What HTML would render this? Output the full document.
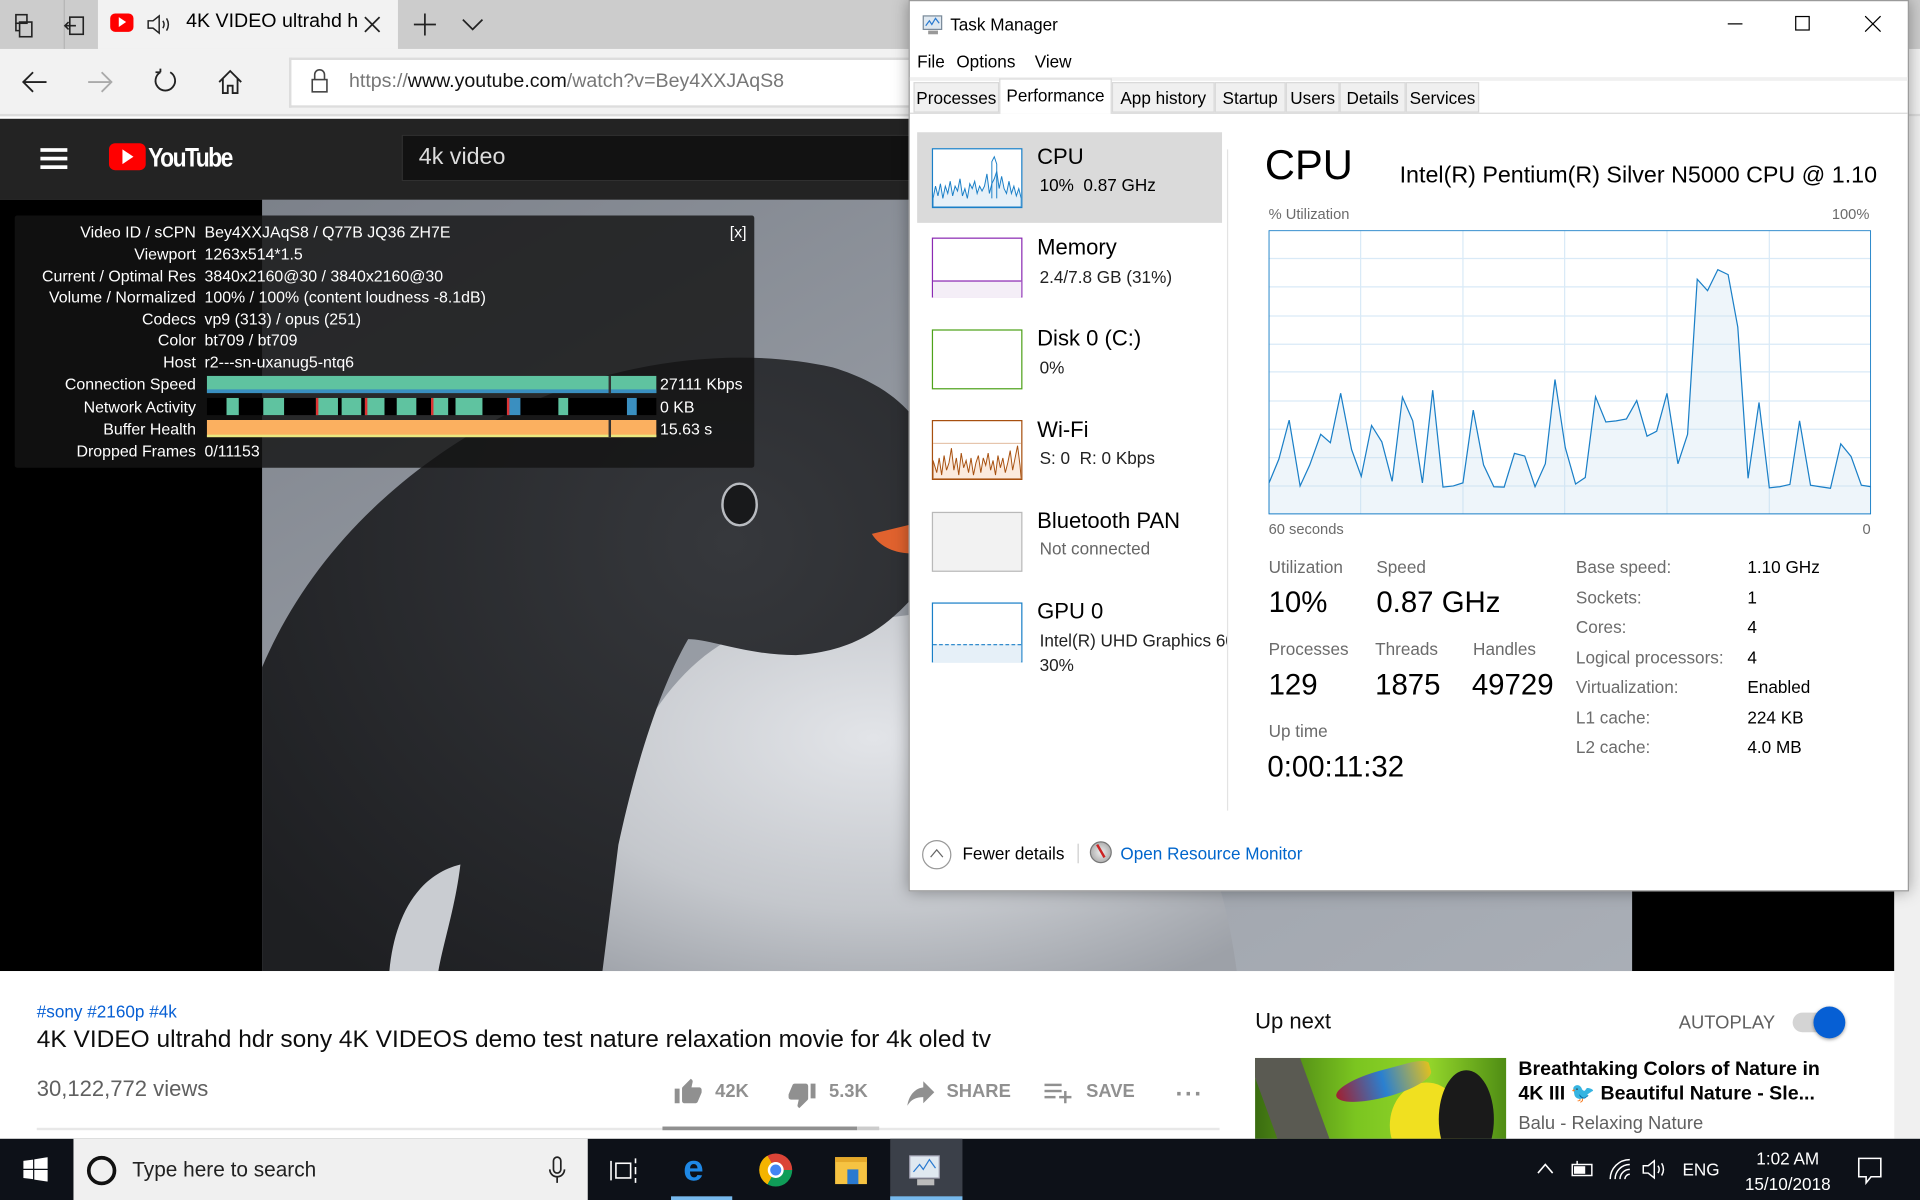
<!DOCTYPE html>
<html><head><meta charset="utf-8"><style>
*{margin:0;padding:0;box-sizing:border-box}
html,body{width:1920px;height:1200px;overflow:hidden;background:#fff}
#w{position:absolute;left:0;top:0;width:1568px;height:980px;transform:scale(1.2244898);transform-origin:0 0;font-family:"Liberation Sans",sans-serif;overflow:hidden}
.a{position:absolute;white-space:nowrap}
.st{font-size:13px;color:#fff;line-height:18px}
.st .l{position:absolute;right:456px;text-align:right}
.st .v{position:absolute;left:155px}
.tab{position:absolute;top:67px;height:25px;background:#f0f0f0;border:1px solid #d9d9d9;font-size:14px;line-height:24px;text-align:center;color:#000}
.th{position:absolute;left:761px;width:74px;height:49px;background:#fff}
.tt{position:absolute;left:847px;font-size:18px;color:#000;white-space:nowrap}
.ts{position:absolute;left:849px;font-size:14px;color:#222;white-space:nowrap}
.lb{position:absolute;font-size:14px;color:#6b6b6b}
.vb{position:absolute;font-size:24px;color:#000}
.rl{position:absolute;left:1287px;font-size:14px;color:#6b6b6b}
.rv{position:absolute;left:1427px;font-size:14px;color:#000}
</style></head><body><div id="w">

<!-- browser tab bar -->
<div class="a" style="left:0;top:0;width:1568px;height:40px;background:#cccccc"></div>
<div class="a" style="left:80px;top:0;width:245px;height:40px;background:#f2f2f2"></div>
<div class="a" style="left:52px;top:0;width:1px;height:40px;background:#b5b5b5"></div>
<svg class="a" style="left:10px;top:10px" width="22" height="22" viewBox="0 0 22 22" fill="none" stroke="#222" stroke-width="1.3"><rect x="3" y="2" width="9" height="7"/><rect x="6" y="8" width="10" height="12"/><path d="M3 9v6h3"/></svg>
<svg class="a" style="left:51px;top:11px" width="20" height="20" viewBox="0 0 20 20" fill="none" stroke="#222" stroke-width="1.3"><rect x="6" y="3" width="11" height="14"/><path d="M2 10h9M5 7l-3 3 3 3"/></svg>
<div class="a" style="left:90px;top:11px;width:19px;height:15px;background:#f00;border-radius:4px"></div>
<div class="a" style="left:97px;top:14px;width:0;height:0;border-left:6px solid #fff;border-top:4.5px solid transparent;border-bottom:4.5px solid transparent"></div>
<svg class="a" style="left:119px;top:10px" width="22" height="20" viewBox="0 0 22 20" fill="none" stroke="#222" stroke-width="1.2"><path d="M2 7h4l5-4v14l-5-4H2z"/><path d="M14 7q2 3 0 6M17 5q3 5 0 10"/></svg>
<div class="a" style="left:152px;top:9px;font-size:16px;color:#000">4K VIDEO ultrahd h</div>
<svg class="a" style="left:297px;top:13px" width="14" height="14" viewBox="0 0 14 14" stroke="#222" stroke-width="1.4"><path d="M1 1l12 12M13 1L1 13"/></svg>
<svg class="a" style="left:337px;top:10px" width="20" height="20" viewBox="0 0 20 20" stroke="#222" stroke-width="1.4"><path d="M10 1v18M1 10h18"/></svg>
<svg class="a" style="left:377px;top:14px" width="18" height="12" viewBox="0 0 18 12" fill="none" stroke="#222" stroke-width="1.4"><path d="M1 2l8 8 8-8"/></svg>

<!-- address bar -->
<div class="a" style="left:0;top:40px;width:1568px;height:55px;background:#f2f2f2;border-bottom:2px solid #ddd"></div>
<svg class="a" style="left:16px;top:56px" width="24" height="22" viewBox="0 0 24 22" fill="none" stroke="#222" stroke-width="1.5"><path d="M22 11H3M11 3l-8 8 8 8"/></svg>
<svg class="a" style="left:70px;top:56px" width="24" height="22" viewBox="0 0 24 22" fill="none" stroke="#aaa" stroke-width="1.5"><path d="M2 11h19M13 3l8 8-8 8"/></svg>
<svg class="a" style="left:124px;top:55px" width="22" height="24" viewBox="0 0 22 24" fill="none" stroke="#222" stroke-width="1.5"><path d="M7 4A8 8 0 1 0 15 4M7 4V1M7 4H3"/></svg>
<svg class="a" style="left:176px;top:55px" width="24" height="24" viewBox="0 0 24 24" fill="none" stroke="#222" stroke-width="1.5"><path d="M3 12L12 3l9 9M6 9v12h4v-6h4v6h4V9"/></svg>
<div class="a" style="left:236px;top:47px;width:520px;height:41px;background:#fff;border:2px solid #ddd;border-right:none"></div>
<svg class="a" style="left:254px;top:56px" width="14" height="20" viewBox="0 0 14 20" fill="none" stroke="#444" stroke-width="1.3"><path d="M3 9V5a4 4 0 0 1 8 0v4"/><rect x="1" y="9" width="12" height="10"/></svg>
<div class="a" style="left:285px;top:58px;font-size:16px;color:#777">https://<span style="color:#111">www.youtube.com</span>/watch?v=Bey4XXJAqS8</div>

<!-- youtube header -->
<div class="a" style="left:0;top:97px;width:1568px;height:66px;background:#232323"></div>
<div class="a" style="left:33px;top:121px;width:22px;height:3px;background:#fff;box-shadow:0 7px 0 #fff,0 14px 0 #fff"></div>
<div class="a" style="left:89px;top:117px;width:30px;height:22px;background:#f00;border-radius:5px"></div>
<div class="a" style="left:100px;top:122px;width:0;height:0;border-left:9px solid #fff;border-top:6px solid transparent;border-bottom:6px solid transparent"></div>
<div class="a" style="left:121px;top:116px;font-size:22px;color:#fff;letter-spacing:-1.5px;transform:scaleX(.85);transform-origin:0 0;font-weight:bold">YouTube</div>
<div class="a" style="left:328px;top:110px;width:430px;height:38px;background:#121212;border:1px solid #303030"></div>
<div class="a" style="left:342px;top:118px;font-size:19px;color:#ddd">4k video</div>

<!-- video -->
<div class="a" style="left:0;top:163px;width:1547px;height:630px;background:#000"></div>
<svg class="a" style="left:214px;top:163px" width="1119" height="630" viewBox="214 163 1119 630">
<defs>
<linearGradient id="bg" x1="0" y1="0" x2="1" y2="1"><stop offset="0" stop-color="#7c818a"/><stop offset=".5" stop-color="#9a9fa7"/><stop offset="1" stop-color="#a9aeb6"/></linearGradient>
<radialGradient id="wb" cx=".45" cy=".35" r=".8"><stop offset="0" stop-color="#e2e4e8"/><stop offset=".6" stop-color="#c4c7cc"/><stop offset="1" stop-color="#9da1a8"/></radialGradient>
<radialGradient id="dk" cx=".7" cy=".3" r=".9"><stop offset="0" stop-color="#36383c"/><stop offset="1" stop-color="#1e1f22"/></radialGradient>
</defs>
<rect x="214" y="163" width="1119" height="630" fill="url(#bg)"/>
<path d="M470 793 C480 680 520 560 600 520 L760 500 L900 560 C980 650 1000 720 1010 793 Z" fill="url(#wb)"/>
<path d="M214 793 L214 545 C250 460 320 385 420 335 C500 295 600 282 680 300 C730 315 760 345 760 380 L760 470 C730 510 700 532 650 535 C610 535 580 522 562 522 C540 560 520 620 505 690 L492 793 Z" fill="url(#dk)"/>
<path d="M318 793 C322 750 340 715 376 706 C372 740 362 770 358 793 Z" fill="#c9ccd1"/>
<ellipse cx="604" cy="412" rx="14" ry="17" fill="#18191b" stroke="#b8bbc0" stroke-width="2"/>
<path d="M712 436 L745 428 L745 452 C730 452 718 446 712 436Z" fill="#e0622e"/>
</svg>
<div class="a" style="left:1547px;top:95px;width:21px;height:835px;background:#f0f0f0"></div>

<!-- stats for nerds -->
<div class="a" style="left:12px;top:176px;width:604px;height:206px;background:rgba(20,20,20,.82);border-radius:2px"></div>
<div class="a st" style="left:12px;top:181px;width:604px;height:200px">
 <span class="l" style="top:0">Video ID / sCPN</span><span class="v" style="top:0">Bey4XXJAqS8 / Q77B JQ36 ZH7E</span>
 <span class="l" style="top:18px">Viewport</span><span class="v" style="top:18px">1263x514*1.5</span>
 <span class="l" style="top:36px">Current / Optimal Res</span><span class="v" style="top:36px">3840x2160@30 / 3840x2160@30</span>
 <span class="l" style="top:53px">Volume / Normalized</span><span class="v" style="top:53px">100% / 100% (content loudness -8.1dB)</span>
 <span class="l" style="top:71px">Codecs</span><span class="v" style="top:71px">vp9 (313) / opus (251)</span>
 <span class="l" style="top:88px">Color</span><span class="v" style="top:88px">bt709 / bt709</span>
 <span class="l" style="top:106px">Host</span><span class="v" style="top:106px">r2---sn-uxanug5-ntq6</span>
 <span class="l" style="top:124px">Connection Speed</span><span class="v" style="top:124px;left:527px">27111 Kbps</span>
 <span class="l" style="top:143px">Network Activity</span><span class="v" style="top:143px;left:527px">0 KB</span>
 <span class="l" style="top:161px">Buffer Health</span><span class="v" style="top:161px;left:527px">15.63 s</span>
 <span class="l" style="top:179px">Dropped Frames</span><span class="v" style="top:179px">0/11153</span>
 <span class="a" style="left:584px;top:0">[x]</span>
</div>
<div class="a" style="left:169px;top:307px;width:367px;height:14px;background:#5fc3a0;border-bottom:3px solid #3a8fc0"></div>
<div class="a" style="left:497px;top:307px;width:2px;height:14px;background:#333"></div>
<div class="a" style="left:169px;top:325px;width:367px;height:14px;background:#000"></div>
<div class="a" style="left:185px;top:325px;width:10px;height:14px;background:#5fc3a0"></div>
<div class="a" style="left:215px;top:325px;width:17px;height:14px;background:#5fc3a0"></div>
<div class="a" style="left:258px;top:325px;width:18px;height:14px;background:#5fc3a0;border-left:2px solid #d33"></div>
<div class="a" style="left:279px;top:325px;width:16px;height:14px;background:#5fc3a0"></div>
<div class="a" style="left:298px;top:325px;width:16px;height:14px;background:#5fc3a0;border-left:2px solid #d33"></div>
<div class="a" style="left:324px;top:325px;width:16px;height:14px;background:#5fc3a0"></div>
<div class="a" style="left:352px;top:325px;width:14px;height:14px;background:#5fc3a0;border-left:2px solid #d33"></div>
<div class="a" style="left:372px;top:325px;width:22px;height:14px;background:#5fc3a0"></div>
<div class="a" style="left:414px;top:325px;width:11px;height:14px;background:#3a8fc0;border-left:2px solid #d33"></div>
<div class="a" style="left:456px;top:325px;width:8px;height:14px;background:#5fc3a0"></div>
<div class="a" style="left:512px;top:325px;width:8px;height:14px;background:#3a8fc0"></div>
<div class="a" style="left:169px;top:343px;width:367px;height:14px;background:#fbb060;border-bottom:2px solid #e8e880"></div>
<div class="a" style="left:497px;top:343px;width:2px;height:14px;background:#333"></div>

<!-- below video -->
<div class="a" style="left:30px;top:818px;font-size:14px;color:#065fd4">#sony #2160p #4k</div>
<div class="a" style="left:30px;top:838px;font-size:20px;color:#0d0d0d">4K VIDEO ultrahd hdr sony 4K VIDEOS demo test nature relaxation movie for 4k oled tv</div>
<div class="a" style="left:30px;top:879px;font-size:18px;color:#606060">30,122,772 views</div>
<svg class="a" style="left:550px;top:880px" width="24" height="24" viewBox="0 0 24 24" fill="#909090"><path d="M1 21h4V9H1v12zm22-11c0-1.1-.9-2-2-2h-6.3l1-4.6v-.3c0-.4-.2-.8-.4-1.1L14.2 1 7.6 7.6C7.2 7.9 7 8.4 7 9v10c0 1.1.9 2 2 2h9c.8 0 1.5-.5 1.8-1.2l3-7.1c.1-.2.2-.5.2-.7v-2z"/></svg>
<div class="a" style="left:584px;top:883px;font-size:15px;color:#909090;font-weight:bold">42K</div>
<svg class="a" style="left:643px;top:882px" width="24" height="24" viewBox="0 0 24 24" fill="#909090"><path d="M15 3H6c-.8 0-1.5.5-1.8 1.2l-3 7.1c-.1.2-.2.5-.2.7v2c0 1.1.9 2 2 2h6.3l-1 4.6v.3c0 .4.2.8.4 1.1L9.8 23l6.6-6.6c.4-.4.6-.9.6-1.4V5c0-1.1-.9-2-2-2zm4 0v12h4V3h-4z"/></svg>
<div class="a" style="left:677px;top:883px;font-size:15px;color:#909090;font-weight:bold">5.3K</div>
<svg class="a" style="left:740px;top:882px" width="24" height="22" viewBox="0 0 24 22" fill="#909090"><path d="M14 6V1l9 9-9 9v-5C8 14 4 16 1 21 2 14 6 7 14 6z"/></svg>
<div class="a" style="left:773px;top:883px;font-size:15px;color:#909090;font-weight:bold">SHARE</div>
<svg class="a" style="left:853px;top:884px" width="24" height="18" viewBox="0 0 24 18" fill="#909090"><rect x="0" y="1" width="14" height="2"/><rect x="0" y="6" width="14" height="2"/><rect x="0" y="11" width="9" height="2"/><rect x="12" y="11" width="10" height="2"/><rect x="16" y="7" width="2" height="10"/></svg>
<div class="a" style="left:887px;top:883px;font-size:15px;color:#909090;font-weight:bold">SAVE</div>
<div class="a" style="left:960px;top:883px;font-size:20px;color:#909090;font-weight:bold;letter-spacing:1px">···</div>
<div class="a" style="left:30px;top:921px;width:966px;height:2px;background:#e8e8e8"></div>
<div class="a" style="left:541px;top:920px;width:159px;height:3px;background:#909090"></div>
<div class="a" style="left:700px;top:920px;width:18px;height:3px;background:#ccc"></div>

<div class="a" style="left:1025px;top:824px;font-size:18px;color:#0d0d0d">Up next</div>
<div class="a" style="left:1371px;top:827px;font-size:15px;color:#606060">AUTOPLAY</div>
<div class="a" style="left:1464px;top:827px;width:40px;height:16px;border-radius:8px;background:#d4d4d4"></div>
<div class="a" style="left:1481px;top:822px;width:26px;height:26px;border-radius:50%;background:#065fd4;box-shadow:0 1px 3px rgba(0,0,0,.4)"></div>
<div class="a" style="left:1025px;top:864px;width:205px;height:66px;background:linear-gradient(90deg,#3a6c10,#7bc520 40%,#92d42a 70%,#4f8d14);overflow:hidden">
  <div class="a" style="left:10px;top:-10px;width:40px;height:100px;background:#5a5a52;transform:rotate(-20deg)"></div>
  <div class="a" style="left:110px;top:20px;width:60px;height:70px;border-radius:50%;background:#f0e020"></div>
  <div class="a" style="left:150px;top:10px;width:45px;height:80px;border-radius:50%;background:#1a1a1a"></div>
  <div class="a" style="left:65px;top:10px;width:80px;height:22px;border-radius:50% 20% 50% 50%;background:linear-gradient(90deg,#a02030,#2a80d0,#e0c020);transform:rotate(-15deg)"></div>
</div>
<div class="a" style="left:1240px;top:864px;font-size:16px;color:#030303;font-weight:bold;line-height:20px">Breathtaking Colors of Nature in<br>4K III 🐦 Beautiful Nature - Sle...</div>
<div class="a" style="left:1240px;top:909px;font-size:15px;color:#606060">Balu - Relaxing Nature</div>

<!-- task manager -->
<div class="a" style="left:742px;top:0;width:817px;height:728px;background:#fff;border:1px solid #9a9a9a;box-shadow:0 0 12px rgba(0,0,0,.35)"></div>
<svg class="a" style="left:753px;top:11px" width="18" height="18" viewBox="0 0 18 18"><rect x="1" y="2" width="15" height="11" fill="#dfe8f0" stroke="#7a8a9a"/><path d="M3 10l3-4 2 3 3-5 3 4" stroke="#2a7ad0" fill="none"/><rect x="5" y="14" width="8" height="3" fill="#999"/></svg>
<div class="a" style="left:776px;top:12px;font-size:14px;color:#000">Task Manager</div>
<div class="a" style="left:1411px;top:19px;width:12px;height:1px;background:#000"></div>
<div class="a" style="left:1466px;top:13px;width:12px;height:12px;border:1px solid #000"></div>
<svg class="a" style="left:1523px;top:13px" width="13" height="13" viewBox="0 0 13 13" stroke="#000" stroke-width="1"><path d="M0 0l13 13M13 0L0 13"/></svg>
<div class="a" style="left:749px;top:42px;font-size:14px;color:#000">File</div>
<div class="a" style="left:781px;top:42px;font-size:14px;color:#000">Options</div>
<div class="a" style="left:845px;top:42px;font-size:14px;color:#000">View</div>
<div class="a" style="left:743px;top:63px;width:815px;height:3px;background:#f0f0f0"></div>
<div class="a" style="left:743px;top:92px;width:815px;height:1px;background:#d9d9d9"></div>
<div class="tab" style="left:746px;width:70px">Processes</div>
<div class="tab" style="left:816px;top:64px;height:29px;width:92px;background:#fff;border-bottom:none;line-height:26px">Performance</div>
<div class="tab" style="left:908px;width:84px">App history</div>
<div class="tab" style="left:992px;width:58px">Startup</div>
<div class="tab" style="left:1050px;width:44px">Users</div>
<div class="tab" style="left:1094px;width:54px">Details</div>
<div class="tab" style="left:1148px;width:60px">Services</div>

<div class="a" style="left:749px;top:108px;width:249px;height:74px;background:#dadada"></div>
<div class="a" style="left:1002px;top:122px;width:1px;height:540px;background:#e3e3e3"></div>

<svg class="th" style="top:121px;border:1px solid #1a7fc7" viewBox="0 0 72 47" preserveAspectRatio="none"><path d="M0 40L2 30 4 38 6 28 8 40 10 30 12 36 14 26 16 38 18 30 20 34 22 24 24 38 26 32 28 40 30 28 32 32 34 26 36 36 38 30 40 34 42 30 44 20 46 36 48 28 50 24 52 18 54 32 56 22 58 32 60 36 62 26 64 36 66 30 68 38 70 32 72 40 72 47 0 47Z" fill="#e6f0f8" stroke="#1a7fc7" stroke-width=".8"/><path d="M48 40L48 10 50 6 52 12 52 40" fill="none" stroke="#1a7fc7" stroke-width=".8"/></svg>
<div class="tt" style="top:118px">CPU</div><div class="ts" style="top:143px;color:#000">10%&nbsp; 0.87 GHz</div>

<div class="th" style="top:194px;border:1px solid #8b2ab3"><div class="a" style="left:0;top:34px;width:72px;height:14px;background:#f4eef7;border-top:1px solid #8b2ab3"></div></div>
<div class="tt" style="top:192px">Memory</div><div class="ts" style="top:218px">2.4/7.8 GB (31%)</div>

<div class="th" style="top:269px;border:1px solid #4ea21a"></div>
<div class="tt" style="top:266px">Disk 0 (C:)</div><div class="ts" style="top:292px">0%</div>

<svg class="th" style="top:343px;border:1px solid #a7500f" viewBox="0 0 72 47" preserveAspectRatio="none"><path d="M0 47V32L3 42 5 30 7 44 9 28 11 40 13 34 15 22 17 40 19 30 21 44 23 26 25 38 27 32 29 42 31 30 33 44 35 34 37 28 39 42 41 30 43 36 45 26 47 40 49 32 51 44 53 28 55 38 57 30 59 42 61 34 63 24 65 40 67 30 69 20 71 36 72 47Z" fill="#fbeadd" stroke="#a7500f" stroke-width=".8"/><path d="M0 18H72" stroke="#d7a27c" stroke-width=".6"/></svg>
<div class="tt" style="top:341px">Wi-Fi</div><div class="ts" style="top:366px">S: 0&nbsp; R: 0 Kbps</div>

<div class="th" style="top:418px;border:1px solid #b9b9b9;background:#f2f2f2"></div>
<div class="tt" style="top:415px">Bluetooth PAN</div><div class="ts" style="top:440px;color:#666">Not connected</div>

<div class="th" style="top:492px;border:1px solid #1a7fc7"><div class="a" style="left:0;top:33px;width:72px;height:15px;background:#e6f0f8;border-top:1px dashed #1a7fc7"></div></div>
<div class="tt" style="top:489px">GPU 0</div><div class="ts" style="top:515px;width:153px;overflow:hidden">Intel(R) UHD Graphics 600</div><div class="ts" style="top:535px">30%</div>

<div class="a" style="left:1033px;top:116px;font-size:34px;color:#000">CPU</div>
<div class="a" style="left:1143px;top:133px;font-size:19px;color:#000">Intel(R) Pentium(R) Silver N5000 CPU @ 1.10</div>
<div class="a" style="left:1036px;top:168px;font-size:12px;color:#6b6b6b">% Utilization</div>
<div class="a" style="left:1496px;top:168px;font-size:12px;color:#6b6b6b">100%</div>
<svg class="a" style="left:1036px;top:188px" width="492" height="232" viewBox="556 602 936 742" preserveAspectRatio="none">
<g stroke="#d9eaf7" stroke-width="1"><path d="M699 602V1344M858 602V1344M1016 602V1344M1175 602V1344M1334 602V1344M556 676H1492M556 750H1492M556 826H1492M556 900H1492M556 972H1492M556 1048H1492M556 1122H1492M556 1196H1492M556 1270H1492" vector-effect="non-scaling-stroke"/></g>
<path d="M556 1265L572 1200 588 1098 605 1270 620 1215 637 1135 652 1157 668 1028 685 1175 700 1245 716 1112 732 1155 748 1258 764 1038 780 1100 795 1262 811 1020 827 1273 843 1270 858 1262 874 1072 890 1215 906 1272 922 1273 938 1185 954 1192 970 1272 986 1212 1001 992 1017 1170 1033 1265 1048 1248 1064 1037 1080 1103 1096 1100 1112 1095 1128 1047 1144 1140 1159 1127 1175 1028 1192 1212 1207 1135 1222 730 1238 760 1254 705 1270 718 1285 855 1301 1250 1318 1052 1334 1275 1350 1272 1366 1266 1381 1100 1398 1268 1413 1272 1429 1276 1445 1160 1461 1193 1477 1268 1492 1272 1492 1344 556 1344Z" fill="rgba(200,222,240,.3)" stroke="#1a7fc7" stroke-width="1" vector-effect="non-scaling-stroke"/>
<rect x="556" y="602" width="936" height="742" fill="none" stroke="#1a7fc7" stroke-width="1.5" vector-effect="non-scaling-stroke"/>
</svg>
<div class="a" style="left:1036px;top:425px;font-size:12px;color:#6b6b6b">60 seconds</div>
<div class="a" style="left:1521px;top:425px;font-size:12px;color:#6b6b6b">0</div>

<div class="lb" style="left:1036px;top:455px">Utilization</div><div class="lb" style="left:1124px;top:455px">Speed</div>
<div class="vb" style="left:1036px;top:479px">10%</div><div class="vb" style="left:1124px;top:479px">0.87 GHz</div>
<div class="lb" style="left:1036px;top:522px">Processes</div><div class="lb" style="left:1123px;top:522px">Threads</div><div class="lb" style="left:1203px;top:522px">Handles</div>
<div class="vb" style="left:1036px;top:546px">129</div><div class="vb" style="left:1123px;top:546px">1875</div><div class="vb" style="left:1202px;top:546px">49729</div>
<div class="lb" style="left:1036px;top:589px">Up time</div>
<div class="vb" style="left:1035px;top:613px">0:00:11:32</div>

<div class="rl" style="top:455px">Base speed:</div><div class="rv" style="top:455px">1.10 GHz</div>
<div class="rl" style="top:480px">Sockets:</div><div class="rv" style="top:480px">1</div>
<div class="rl" style="top:504px">Cores:</div><div class="rv" style="top:504px">4</div>
<div class="rl" style="top:529px">Logical processors:</div><div class="rv" style="top:529px">4</div>
<div class="rl" style="top:553px">Virtualization:</div><div class="rv" style="top:553px">Enabled</div>
<div class="rl" style="top:578px">L1 cache:</div><div class="rv" style="top:578px">224 KB</div>
<div class="rl" style="top:602px">L2 cache:</div><div class="rv" style="top:602px">4.0 MB</div>

<div class="a" style="left:753px;top:686px;width:24px;height:24px;border-radius:50%;border:1px solid #999"></div>
<svg class="a" style="left:759px;top:692px" width="12" height="10" viewBox="0 0 12 10" fill="none" stroke="#666"><path d="M1 8l5-6 5 6"/></svg>
<div class="a" style="left:786px;top:689px;font-size:14px;color:#000">Fewer details</div>
<div class="a" style="left:880px;top:689px;width:1px;height:16px;background:#ccc"></div>
<div class="a" style="left:890px;top:687px;width:18px;height:18px;border-radius:50%;background:radial-gradient(#eee,#999);border:1px solid #777"></div>
<div class="a" style="left:898px;top:689px;width:2px;height:12px;background:#c22;transform:rotate(-30deg)"></div>
<div class="a" style="left:915px;top:689px;font-size:14px;color:#0066cc">Open Resource Monitor</div>

<!-- taskbar -->
<div class="a" style="left:0;top:930px;width:1568px;height:50px;background:#0d1118"></div>
<svg class="a" style="left:19px;top:945px" width="20" height="20" viewBox="0 0 20 20" fill="#fff"><path d="M0 3l8-1v7.5H0zM9 1.8L20 0v9.5H9zM0 10.5h8V18l-8-1zM9 10.5h11V20l-11-1.6z"/></svg>
<div class="a" style="left:60px;top:930px;width:420px;height:50px;background:#f0f0f0"></div>
<div class="a" style="left:71px;top:944px;width:24px;height:24px;border-radius:50%;border:3px solid #111"></div>
<div class="a" style="left:108px;top:946px;font-size:17px;color:#222">Type here to search</div>
<svg class="a" style="left:447px;top:944px" width="16" height="24" viewBox="0 0 16 24" fill="none" stroke="#222" stroke-width="1.4"><rect x="5" y="1" width="6" height="13" rx="3"/><path d="M2 11a6 6 0 0 0 12 0M8 17v5"/></svg>
<svg class="a" style="left:498px;top:944px" width="24" height="24" viewBox="0 0 24 24" fill="none" stroke="#fff" stroke-width="1.3"><rect x="5" y="6" width="12" height="12"/><path d="M1 4v16M21 2v4M21 9v6M21 18v4"/></svg>
<div class="a" style="left:558px;top:938px;font-size:30px;color:#1e88e5;font-weight:bold;line-height:34px">e</div>
<div class="a" style="left:548px;top:977px;width:50px;height:3px;background:#76b9ed"></div>
<div class="a" style="left:620px;top:942px;width:27px;height:27px;border-radius:50%;background:conic-gradient(from -30deg,#db4437 0 120deg,#0f9d58 120deg 240deg,#f4b400 240deg 360deg)"></div>
<div class="a" style="left:627px;top:949px;width:13px;height:13px;border-radius:50%;background:#4285f4;border:2px solid #fff"></div>
<div class="a" style="left:682px;top:945px;width:26px;height:22px;background:#f6c342;border-top:4px solid #e5a92a"></div>
<div class="a" style="left:692px;top:955px;width:9px;height:12px;background:#2a7ad0"></div>
<div class="a" style="left:727px;top:930px;width:59px;height:50px;background:#3b4049"></div>
<div class="a" style="left:727px;top:977px;width:59px;height:3px;background:#76b9ed"></div>
<svg class="a" style="left:741px;top:942px" width="30" height="28" viewBox="0 0 30 28"><rect x="2" y="2" width="24" height="18" fill="#dfe8f0" stroke="#aab"/><path d="M5 15l5-6 3 4 5-8 5 7" stroke="#2a7ad0" fill="none"/><rect x="8" y="21" width="14" height="5" fill="#bbb"/></svg>
<svg class="a" style="left:1254px;top:948px" width="16" height="12" viewBox="0 0 16 12" fill="none" stroke="#fff" stroke-width="1.3"><path d="M2 10l6-7 6 7"/></svg>
<svg class="a" style="left:1282px;top:946px" width="22" height="18" viewBox="0 0 22 18" fill="none" stroke="#fff" stroke-width="1.2"><rect x="2" y="5" width="16" height="9"/><rect x="4" y="7" width="8" height="5" fill="#fff"/><path d="M6 2v3"/></svg>
<svg class="a" style="left:1313px;top:945px" width="20" height="20" viewBox="0 0 20 20" fill="none" stroke="#fff" stroke-width="1.2"><path d="M2 18A16 16 0 0 1 18 2M6 18A12 12 0 0 1 18 6M10 18a8 8 0 0 1 8-8M14 18a4 4 0 0 1 4-4"/></svg>
<svg class="a" style="left:1340px;top:946px" width="22" height="18" viewBox="0 0 22 18" fill="none" stroke="#fff" stroke-width="1.2"><path d="M2 6h4l5-4v14l-5-4H2z"/><path d="M14 6q2 3 0 6M17 4q3 5 0 10"/></svg>
<div class="a" style="left:1374px;top:947px;font-size:14px;color:#fff">ENG</div>
<div class="a" style="left:1420px;top:936px;font-size:14px;color:#fff;text-align:center;width:80px;line-height:21px">1:02 AM<br>15/10/2018</div>
<svg class="a" style="left:1516px;top:944px" width="22" height="24" viewBox="0 0 22 24" fill="none" stroke="#fff" stroke-width="1.3"><path d="M2 2h18v15H12l-4 5v-5H2z"/></svg>
</div></body></html>
